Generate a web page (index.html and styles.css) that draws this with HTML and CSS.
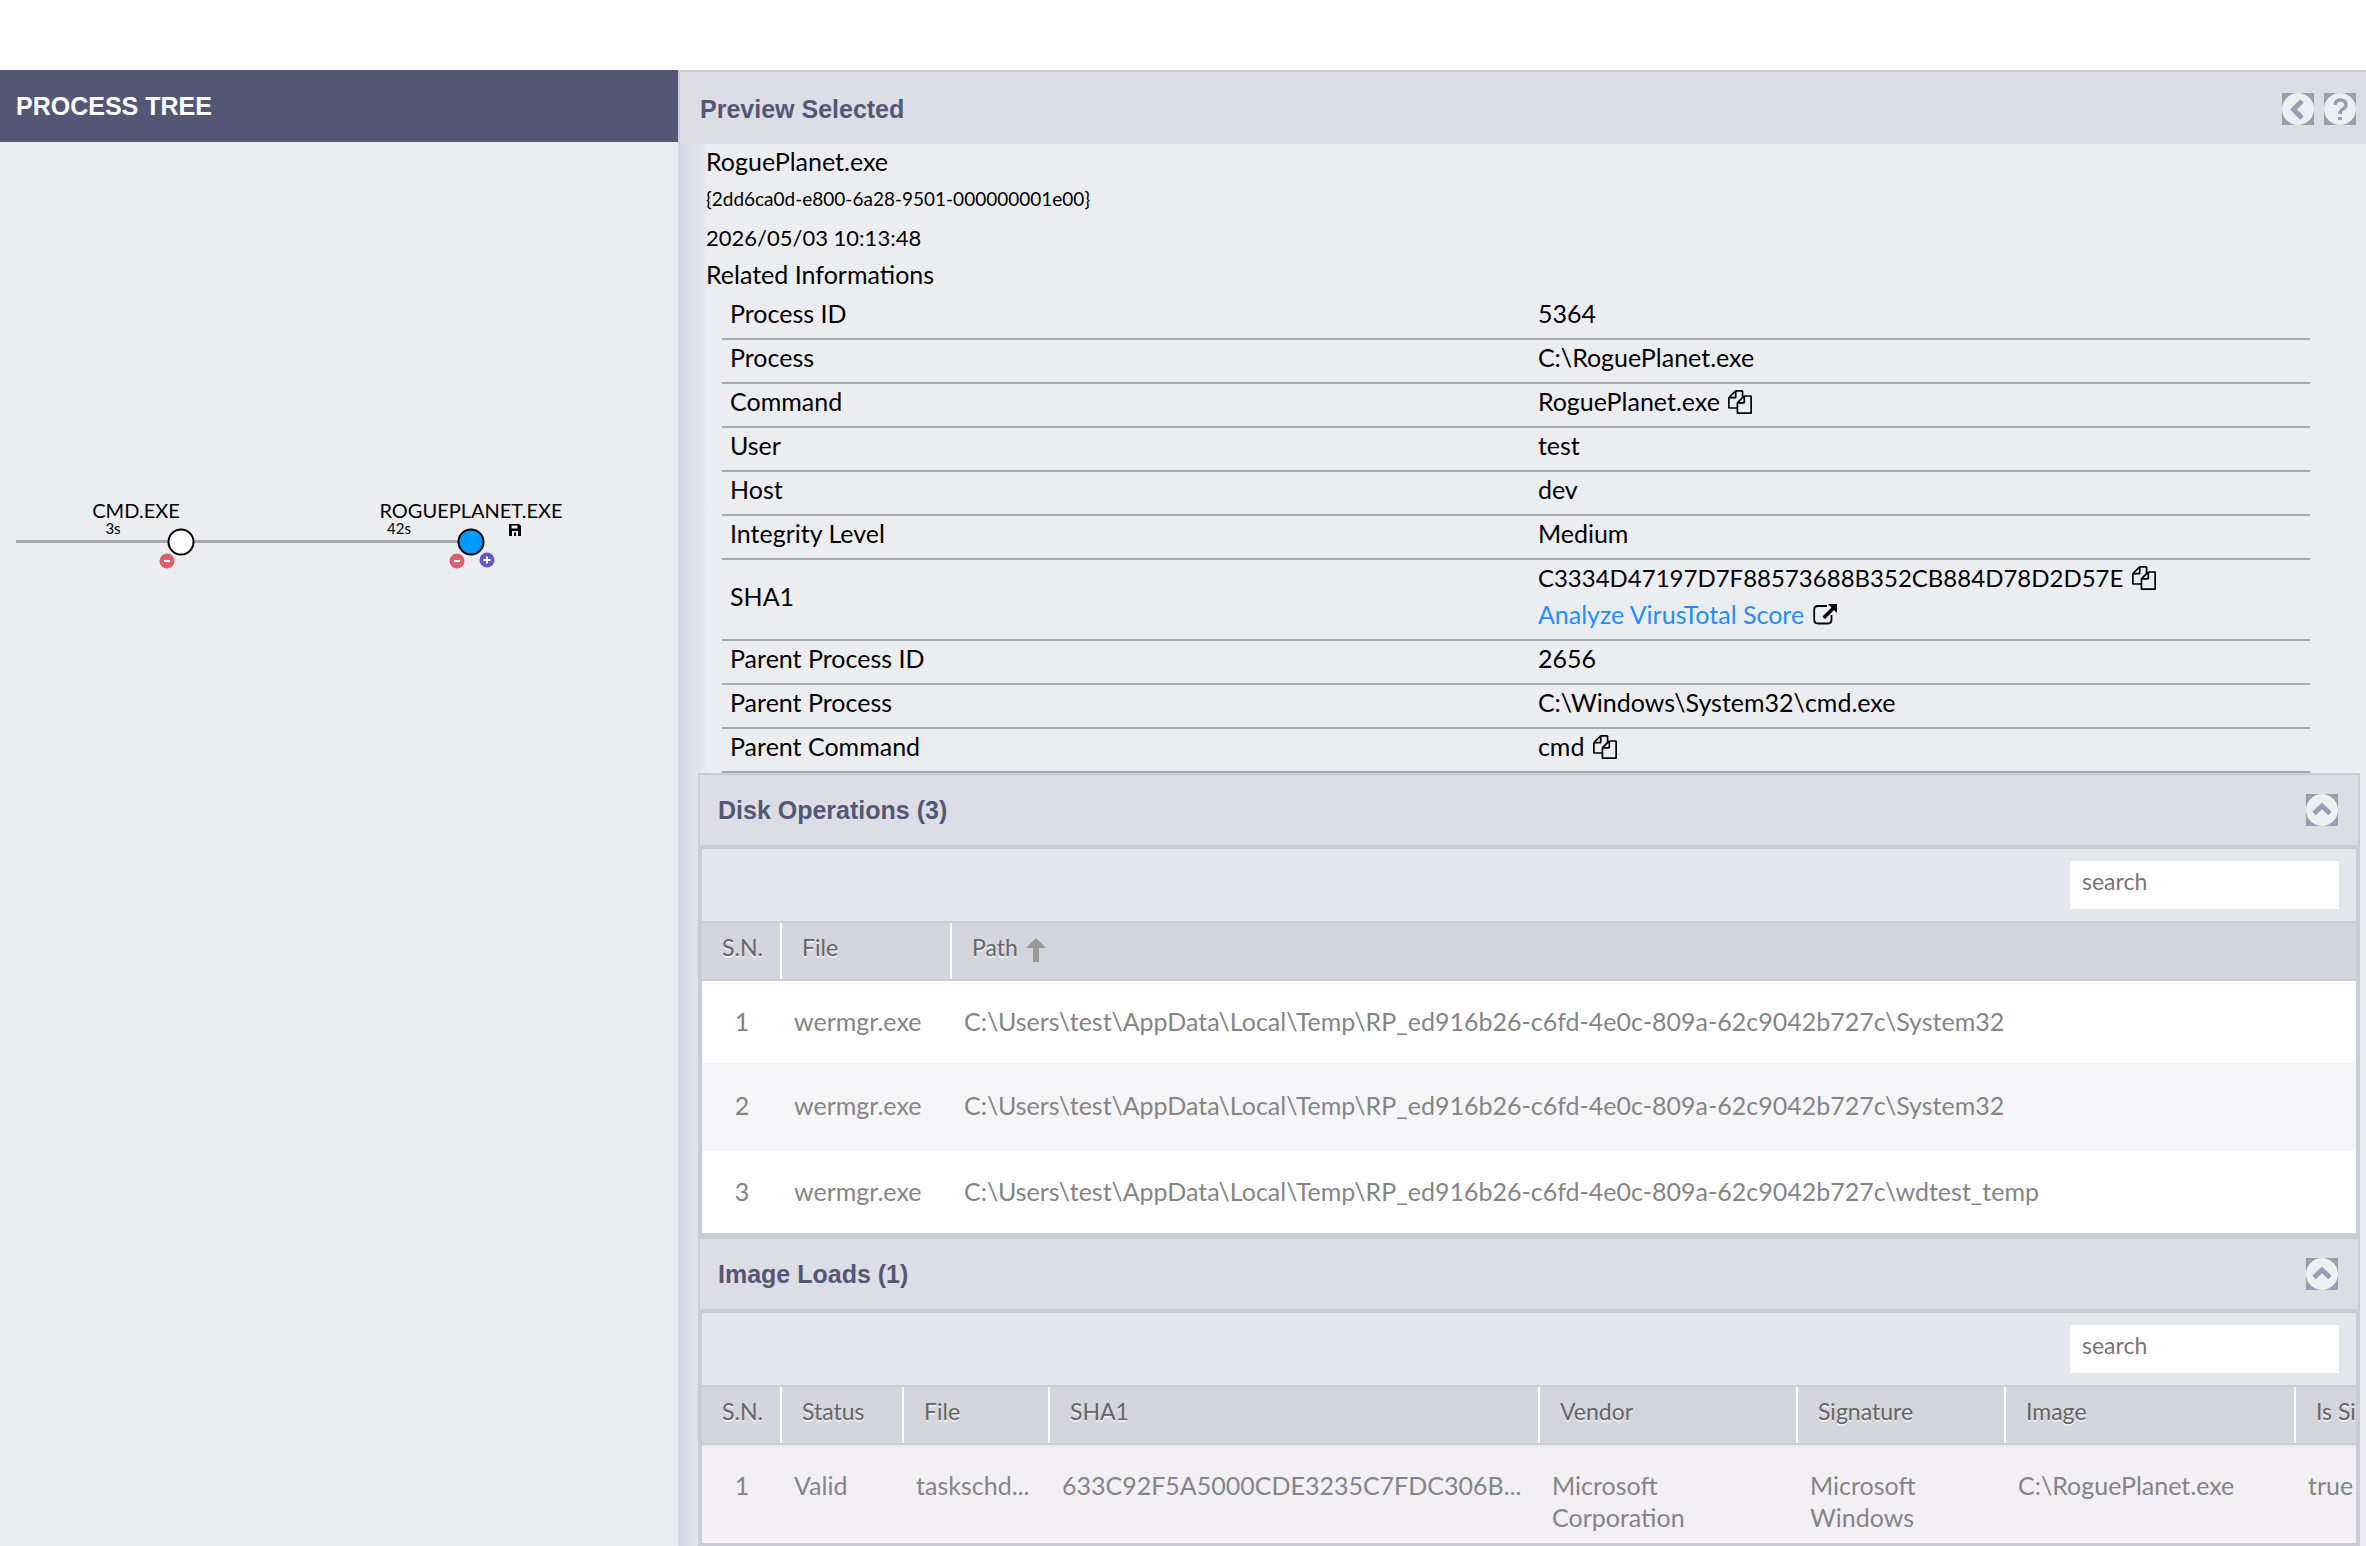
FILE: index.html
```html
<!DOCTYPE html>
<html lang="en">
<head>
<meta charset="utf-8">
<title>Process Tree</title>
<link rel="stylesheet" href="styles.css">
</head>
<body>
<svg class="sprite" aria-hidden="true">
  <symbol id="copy" viewBox="0 0 1792 1792"><path d="M1696 384q40 0 68 28t28 68v1216q0 40-28 68t-68 28h-960q-40 0-68-28t-28-68v-288h-544q-40 0-68-28t-28-68v-672q0-40 20-88t48-76l408-408q28-28 76-48t88-20h416q40 0 68 28t28 68v328q68-40 128-40h416zm-544 213l-299 299h299v-299zm-640-384l-299 299h299v-299zm196 647l316-316v-416h-384v416q0 40-28 68t-68 28h-416v640h512v-256q0-40 20-88t48-76zm956 804v-1152h-384v416q0 40-28 68t-68 28h-416v640h896z"/></symbol>
  <symbol id="external" viewBox="0 0 24 24"><path d="M14 3H5Q1.200 3 1.200 7v9.500Q1.200 20.500 5 20.500h10Q18.500 20.500 18.500 16.500V12" fill="none" stroke="#000" stroke-width="1.800"/><path d="M15 1h9v9l-3-3-9 9-2.500-2.500L18.500 4.500z"/></symbol>
  <symbol id="up" viewBox="0 0 32 32"><circle cx="16" cy="16" r="16" fill="#eeeff2"/><path d="M8 19.500L16 12l8 7.500" fill="none" stroke="#9a9cb2" stroke-width="5"/></symbol>
  <symbol id="left" viewBox="0 0 32 32"><circle cx="16" cy="16" r="16" fill="#eeeff2"/><path d="M20 8l-8.500 8.500L20 25" fill="none" stroke="#9a9cb2" stroke-width="5"/></symbol>
  <symbol id="help" viewBox="0 0 32 32"><circle cx="16" cy="16" r="16" fill="#eeeff2"/><path d="M11 12q.5-5 5.500-5t5.500 4.500q0 3-3 4.500t-3 5" fill="none" stroke="#9a9cb2" stroke-width="3.500"/><path d="M14 24h4v3h-4z" fill="#9a9cb2"/></symbol>
</svg>

<main class="layout">
  <section class="tree">
    <h2 class="tree-title">PROCESS TREE</h2>
    <svg class="tree-canvas" role="img" aria-label="Process tree">
      <path class="link" d="M16 399.500H458"/>
      <text class="node-name" x="136" y="376">CMD.EXE</text>
      <text class="node-time" x="113" y="392">3s</text>
      <circle class="node" cx="181" cy="400" r="12.500"/>
      <g transform="translate(167 419)"><circle r="7.500" fill="#dc5f6c"/><path class="mark" d="M-3 0h6"/></g>
      <text class="node-name" x="471" y="376">ROGUEPLANET.EXE</text>
      <text class="node-time" x="399" y="392">42s</text>
      <circle class="node selected" cx="471" cy="400" r="12.500"/>
      <g transform="translate(457 419)"><circle r="7.500" fill="#dc5f6c"/><path class="mark" d="M-3 0h6"/></g>
      <g transform="translate(487 418)"><circle r="7.500" fill="#5f5bc3"/><path class="mark" d="M-3.500 0h7M0-3.500v7"/></g>
      <path transform="translate(509 382)" fill-rule="evenodd" d="M0 0h10l2 2v10H0zM2.500 1.500v3h6v-3zM3 7v5h6V7zM5 8.500h2V12H5z"/>
    </svg>
  </section>

  <section class="preview">
    <header class="preview-head">
      <h2>Preview Selected</h2>
      <button class="icon-btn" type="button" aria-label="Back"><svg><use href="#left"/></svg></button>
      <button class="icon-btn" type="button" aria-label="Help"><svg><use href="#help"/></svg></button>
    </header>
    <div class="preview-body">
      <div class="summary">
        <p class="name">RoguePlanet.exe</p>
        <p class="guid">{2dd6ca0d-e800-6a28-9501-000000001e00}</p>
        <p class="date">2026/05/03 10:13:48</p>
        <p>Related Informations</p>
      </div>
      <table class="details">
        <tr><th scope="row">Process ID</th><td>5364</td></tr>
        <tr><th scope="row">Process</th><td>C:\RoguePlanet.exe</td></tr>
        <tr><th scope="row">Command</th><td>RoguePlanet.exe <button class="glyph" type="button" aria-label="Copy"><svg><use href="#copy"/></svg></button></td></tr>
        <tr><th scope="row">User</th><td>test</td></tr>
        <tr><th scope="row">Host</th><td>dev</td></tr>
        <tr><th scope="row">Integrity Level</th><td>Medium</td></tr>
        <tr><th scope="row">SHA1</th><td><span class="hash">C3334D47197D7F88573688B352CB884D78D2D57E</span> <button class="glyph" type="button" aria-label="Copy"><svg><use href="#copy"/></svg></button>
          <div class="vt"><a href="#">Analyze VirusTotal Score <svg class="glyph"><use href="#external"/></svg></a></div></td></tr>
        <tr><th scope="row">Parent Process ID</th><td>2656</td></tr>
        <tr><th scope="row">Parent Process</th><td>C:\Windows\System32\cmd.exe</td></tr>
        <tr><th scope="row">Parent Command</th><td>cmd <button class="glyph" type="button" aria-label="Copy"><svg><use href="#copy"/></svg></button></td></tr>
      </table>

      <section class="panel">
        <header class="panel-head"><h3>Disk Operations (3)</h3>
          <button class="icon-btn" type="button" aria-label="Collapse"><svg><use href="#up"/></svg></button></header>
        <div class="panel-body">
          <div class="toolbar"><input type="text" placeholder="search" aria-label="Search disk operations"></div>
          <table class="grid">
            <colgroup><col class="w-sn"><col class="w-disk-file"><col></colgroup>
            <thead><tr><th>S.N.</th><th>File</th><th>Path <svg class="sort" viewBox="0 0 20 24"><path d="M10 0l10 10h-7v14H7V10H0z"/></svg></th></tr></thead>
            <tbody>
              <tr><td>1</td><td>wermgr.exe</td><td>C:\Users\test\AppData\Local\Temp\RP_ed916b26-c6fd-4e0c-809a-62c9042b727c\System32</td></tr>
              <tr><td>2</td><td>wermgr.exe</td><td>C:\Users\test\AppData\Local\Temp\RP_ed916b26-c6fd-4e0c-809a-62c9042b727c\System32</td></tr>
              <tr><td>3</td><td>wermgr.exe</td><td>C:\Users\test\AppData\Local\Temp\RP_ed916b26-c6fd-4e0c-809a-62c9042b727c\wdtest_temp</td></tr>
            </tbody>
          </table>
        </div>
      </section>

      <section class="panel">
        <header class="panel-head"><h3>Image Loads (1)</h3>
          <button class="icon-btn" type="button" aria-label="Collapse"><svg><use href="#up"/></svg></button></header>
        <div class="panel-body">
          <div class="toolbar"><input type="text" placeholder="search" aria-label="Search image loads"></div>
          <table class="grid images">
            <colgroup><col class="w-sn"><col class="w-status"><col class="w-file"><col class="w-sha"><col class="w-vendor"><col class="w-signature"><col class="w-image"><col class="w-signed"></colgroup>
            <thead><tr><th>S.N.</th><th>Status</th><th>File</th><th>SHA1</th><th>Vendor</th><th>Signature</th><th>Image</th><th>Is Signed</th></tr></thead>
            <tbody>
              <tr><td>1</td><td>Valid</td><td>taskschd...</td><td>633C92F5A5000CDE3235C7FDC306B...</td><td>Microsoft<br>Corporation</td><td>Microsoft<br>Windows</td><td>C:\RoguePlanet.exe</td><td>true</td></tr>
            </tbody>
          </table>
        </div>
      </section>
    </div>
  </section>
</main>
</body>
</html>
```

FILE: styles.css
```css
* { box-sizing: border-box; }
body {
  margin: 0;
  background: #fff;
  color: #000;
  font: 25px/32px Lato, "Open Sans", sans-serif;
}
h2, h3, p { margin: 0; }
h2, h3 { font: bold 25px/32px "Liberation Sans", Arial, sans-serif; }
button { border: 0; padding: 0; background: none; font: inherit; cursor: pointer; }
table { border-collapse: separate; border-spacing: 0; }
th { font-weight: normal; text-align: left; }
.sprite { display: none; }

.layout {
  display: grid;
  grid-template-columns: 678fr 1688fr;
  min-height: 100vh;
  padding-top: 70px;
}

/* Process tree */
.tree { background: #ecedf1; min-width: 0; }
.tree-title {
  padding: 20px 16px;
  background: #535775;
  color: #fff;
}
.tree-canvas { display: block; width: 100%; height: 600px; }
.link { stroke: #a9a9a9; stroke-width: 3; }
.node { fill: #fff; stroke: #000; stroke-width: 2; }
.node.selected { fill: #0099ff; }
.node-name { font-size: 20px; text-anchor: middle; }
.node-time { font-size: 15px; text-anchor: middle; }
.mark { stroke: #fff; stroke-width: 2; }

/* Preview */
.preview { display: flex; flex-direction: column; min-width: 0; }
.preview-head {
  display: flex;
  align-items: center;
  gap: 10px;
  height: 74px;
  padding: 2px 10px 0 20px;
  border: 2px solid #ccccd8;
  border-width: 2px 0 0 2px;
  background: #dddde6;
  color: #535775;
}
.preview-head h2, .panel-head h3 { flex: 1; }
.icon-btn { width: 32px; height: 32px; background: #9a9cb2; }
.icon-btn svg { display: block; width: 32px; height: 32px; }
.preview-body {
  flex: 1;
  background: linear-gradient(to right, #d3d5e4, #dddfeb 15px, #ecedf1 32px);
}
.summary { padding-left: 28px; line-height: 36px; }
.name { line-height: 34px; }
.guid { font-size: 19px; line-height: 42px; }
.date { font-size: 22px; }

.details {
  width: calc(100% - 100px);
  margin: 4px 56px 0 44px;
  table-layout: fixed;
  line-height: 34px;
}
.details th, .details td {
  padding: 0 6px 8px;
  border-bottom: 2px solid #a7a9a8;
}
.details th { width: 51%; padding-left: 8px; }
.hash { font-size: 24px; }
.glyph { display: inline-block; width: 24px; height: 24px; margin-left: 2px; vertical-align: -3px; fill: #000; line-height: 24px; }
.glyph svg { display: block; width: 24px; height: 24px; }
.vt { margin-top: 2px; }
.vt a { color: #1e8fff; text-decoration: none; }

/* Panels */
.panel { margin: 0 6px 0 20px; border: 2px solid #ccccd8; }
.panel-head {
  display: flex;
  align-items: center;
  height: 72px;
  padding: 0 20px 0 18px;
  border-bottom: 2px solid #ccccd8;
  background: #dddde6;
  color: #535775;
}
.panel-body { border: 2px solid #ccccd8; background: #fff; overflow: hidden; }
.toolbar {
  display: flex;
  justify-content: flex-end;
  padding: 12px 17px;
  background: #e5e6eb;
}
.toolbar input {
  width: 269px;
  height: 48px;
  padding: 0 12px 8px;
  border: 0;
  background: #fff;
  font: 23px/32px Lato, "Open Sans", sans-serif;
}
.toolbar input::placeholder { color: #757575; opacity: 1; }

.grid { width: 100%; table-layout: fixed; white-space: nowrap; }
.grid th {
  height: 60px;
  padding: 0 20px 8px;
  border-top: 2px solid #ccccd8;
  border-bottom: 2px solid #ccccd8;
  background: linear-gradient(#fff, #fff) right / 2px 100% no-repeat #d5d5de;
  color: #666;
  font-size: 23px;
  text-shadow: 0 2px 0 #eeeef2;
}
.grid th:last-child { background: #d5d5de; }
.grid td {
  height: 82px;
  padding: 24px 12px 0;
  color: #858585;
  vertical-align: top;
}
.grid td:first-child { text-align: center; }
.grid tbody tr:nth-child(even) td { height: 88px; padding-top: 26px; background: #f5f5f8; }
.images td { height: 98px; padding-bottom: 10px; background: #f2f0f5; box-shadow: inset 0 2px #e7e7ed; }
.sort { width: 20px; height: 24px; margin-left: 2px; vertical-align: -6px; fill: #999; }
.w-sn { width: 80px; }
.w-disk-file { width: 170px; }
.w-status { width: 122px; }
.w-file { width: 146px; }
.w-sha { width: 490px; }
.w-vendor { width: 258px; }
.w-signature { width: 208px; }
.w-image { width: 290px; }
.w-signed { width: 160px; }
```
